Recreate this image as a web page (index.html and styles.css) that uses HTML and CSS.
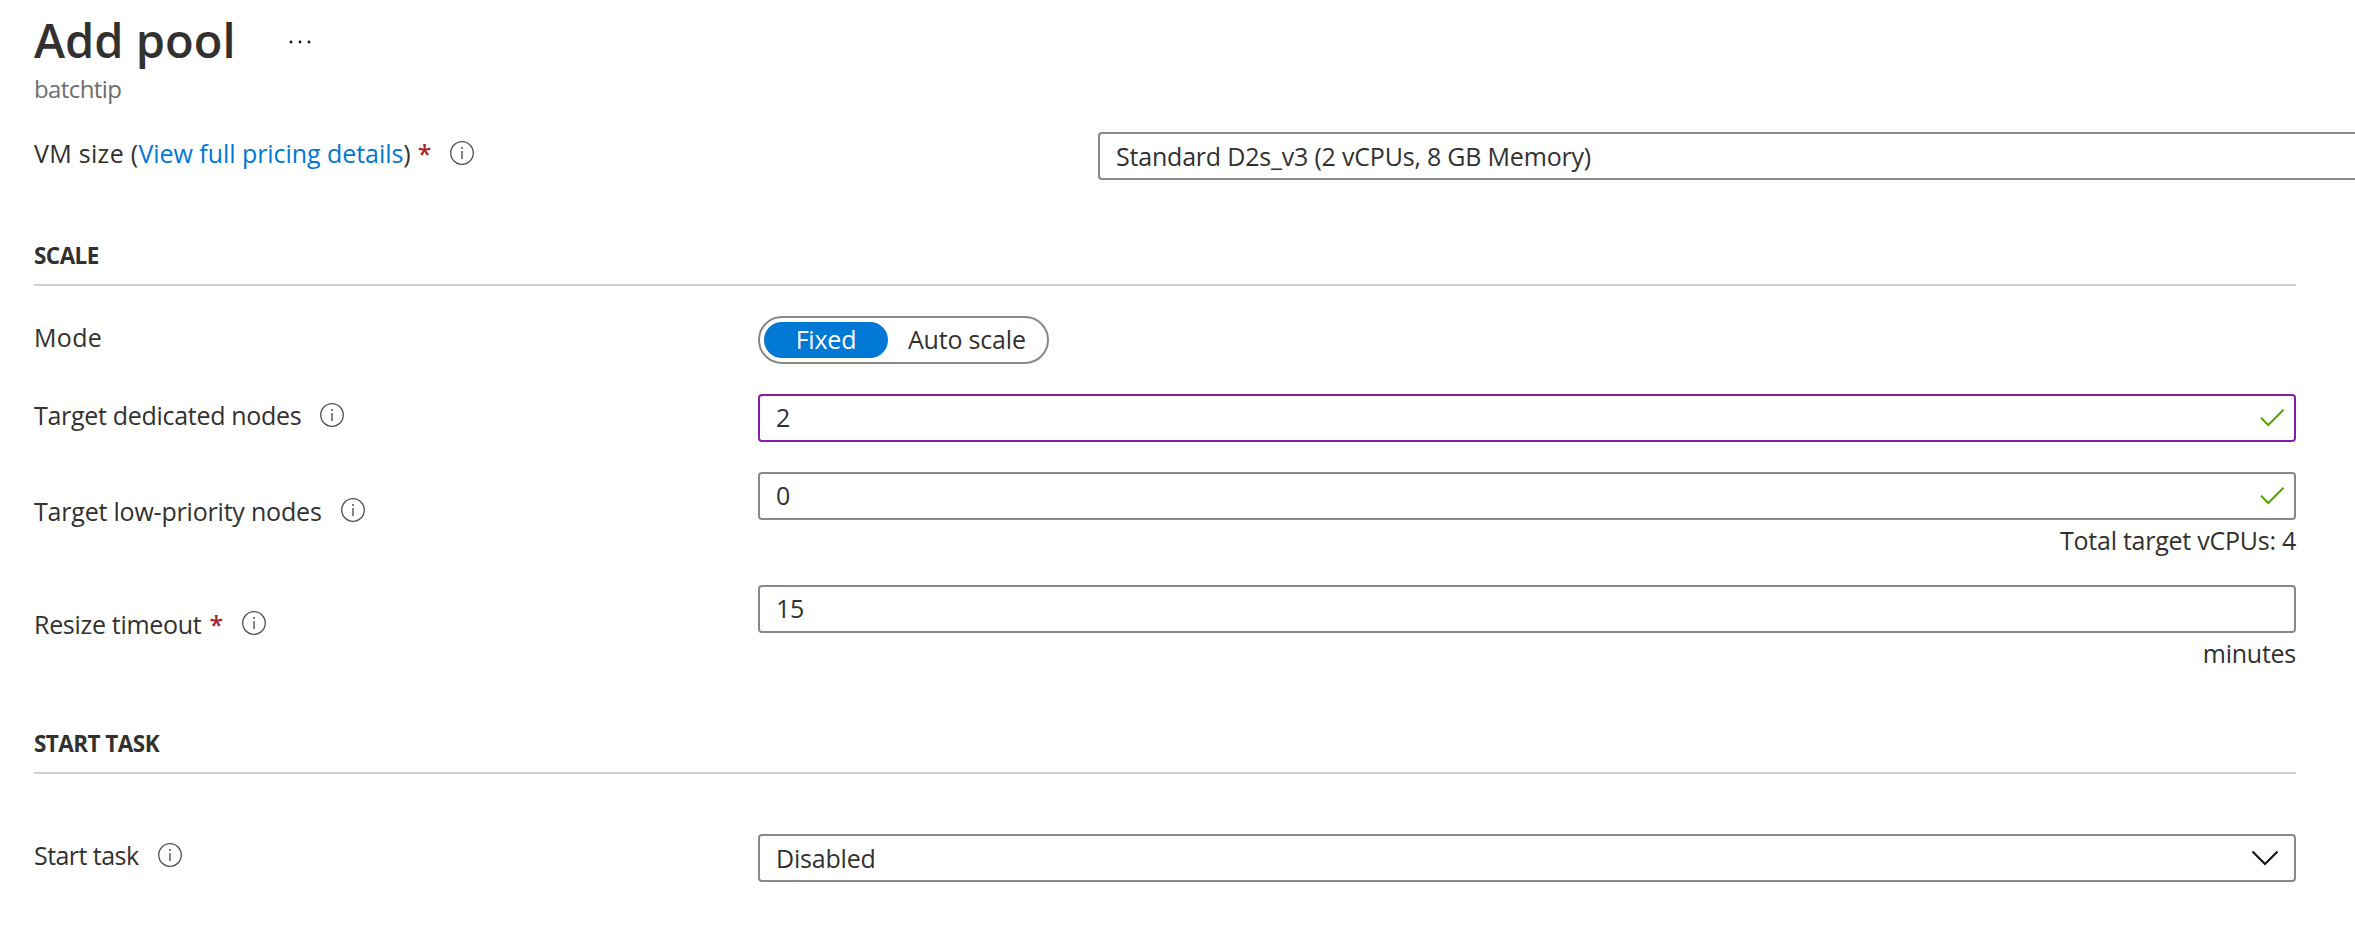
FILE: index.html
```html
<!DOCTYPE html>
<html lang="en">
<head>
<meta charset="utf-8">
<title>Add pool</title>
<link rel="stylesheet" href="styles.css">
</head>
<body>
<svg class="defs" aria-hidden="true">
  <symbol id="info" viewBox="0 0 24 24">
    <circle cx="12" cy="12" r="11.3" fill="none" stroke="#505050" stroke-width="1.3"/>
    <path d="M12 10v8" stroke="#505050" stroke-width="1.4"/>
    <circle cx="12" cy="7" r="1" fill="#505050"/>
  </symbol>
  <symbol id="check" viewBox="0 0 26 20">
    <path d="M2 9.7L9.3 17L24.5 1.8" fill="none" stroke="#57a300" stroke-width="2"/>
  </symbol>
  <symbol id="chevron" viewBox="0 0 28 16">
    <path d="M1.5 1.5L14 14L26.5 1.5" fill="none" stroke="#111" stroke-width="2"/>
  </symbol>
</svg>
<main class="page">
  <header class="header">
    <div class="title-line">
      <h1 class="title">Add pool</h1>
      <svg class="more" viewBox="0 0 22 4"><circle cx="2" cy="2" r="1.4"/><circle cx="11" cy="2" r="1.4"/><circle cx="20" cy="2" r="1.4"/></svg>
    </div>
    <p class="subtitle">batchtip</p>
  </header>

  <div class="row row-wide">
    <div class="label label-vm"><span class="vm">VM size (</span><a class="link">View full pricing details</a><span>)</span><span class="req">*</span><svg class="info"><use href="#info"/></svg></div>
    <div class="field field-cut"><span class="value value-vm">Standard D2s_v3 (2 vCPUs, 8 GB Memory)</span></div>
  </div>

  <h2 class="section">SCALE</h2>
  <div class="rows">
    <div class="row">
      <div class="label"><span class="mode">Mode</span></div>
      <div class="toggle"><span class="option selected">Fixed</span><span class="option">Auto scale</span></div>
    </div>
    <div class="row">
      <div class="label"><span class="name">Target dedicated nodes</span><svg class="info"><use href="#info"/></svg></div>
      <div class="field active"><span class="value number">2</span><svg class="check"><use href="#check"/></svg></div>
    </div>
    <div class="row">
      <div class="label low"><span class="name name-low">Target low-priority nodes</span><svg class="info"><use href="#info"/></svg></div>
      <div class="control">
        <div class="field"><span class="value number">0</span><svg class="check"><use href="#check"/></svg></div>
        <div class="helper">Total target vCPUs: 4</div>
      </div>
    </div>
    <div class="row">
      <div class="label low"><span class="name">Resize timeout</span><span class="req">*</span><svg class="info"><use href="#info"/></svg></div>
      <div class="control">
        <div class="field"><span class="value number">15</span></div>
        <div class="helper">minutes</div>
      </div>
    </div>
  </div>

  <h2 class="section">START TASK</h2>
  <div class="rows rows-task">
    <div class="row">
      <div class="label"><span class="name name-task">Start task</span><svg class="info"><use href="#info"/></svg></div>
      <div class="field"><span class="value">Disabled</span><svg class="chevron"><use href="#chevron"/></svg></div>
    </div>
  </div>
</main>
</body>
</html>
```

FILE: styles.css
```css
* { box-sizing: border-box; }
body {
  margin: 0;
  background: #fff;
  color: #323130;
  font: 25px/30px "Open Sans", "Noto Sans", sans-serif;
}
.defs { display: none; }
.page {
  height: 930px;
  padding: 10px 59px 0 34px;
  overflow: hidden;
}
.title-line { display: flex; align-items: center; }
.title { margin: 0; font-size: 47px; font-weight: 600; line-height: 60px; }
.more { width: 22px; height: 4px; margin: 4px 0 0 53px; fill: #111; }
.subtitle { margin: 4px 0 0; font-size: 24px; letter-spacing: -0.6px; color: #6e6e6e; }

.row { display: grid; grid-template-columns: 724px 1fr; align-items: start; }
.row-wide { grid-template-columns: 1064px 1fr; margin: 28px -59px 0 0; }
.rows { display: grid; gap: 30px; margin-top: 30px; }
.rows-task { margin-top: 60px; }

.label { display: flex; align-items: center; padding-top: 6px; white-space: nowrap; }
.label.low { padding-top: 24px; }
.vm { letter-spacing: 0.3px; }
.link { color: #0078d4; letter-spacing: -0.05px; }
.mode { letter-spacing: 0.35px; }
.name { letter-spacing: -0.3px; }
.name-low { letter-spacing: -0.2px; }
.name-task { letter-spacing: -0.55px; }
.req { margin-left: 8px; color: #a4262c; font-weight: 600; }
.label-vm .req { margin-left: 7px; }
.info { width: 24px; height: 24px; margin-left: 19px; }
.low .info { margin-top: -2px; }

.section {
  margin: 60px 0 0;
  padding: 1px 0 13px;
  border-bottom: 2px solid #d2d0ce;
  font-size: 22.5px;
  font-weight: 700;
  letter-spacing: -0.55px;
}

.field {
  display: flex;
  align-items: center;
  height: 48px;
  padding: 0 9px 0 15px;
  border: 2px solid #8a8886;
  border-radius: 4px;
}
.field.active { border-color: #881fa3; }
.field-cut { border-right: 0; border-radius: 4px 0 0 4px; }
.value { flex: 1; padding-left: 1px; letter-spacing: -0.2px; }
.number { padding-bottom: 2px; }
.check { width: 26px; height: 20px; }
.chevron { width: 28px; height: 16px; margin-right: 6px; }
.helper { margin-top: 5px; text-align: right; letter-spacing: -0.25px; }

.toggle {
  display: flex;
  align-items: center;
  width: 291px;
  height: 48px;
  padding: 0 4px;
  border: 2px solid #8a8886;
  border-radius: 24px;
}
.option {
  flex: none;
  padding: 0 0 2px 20px;
  line-height: 34px;
  letter-spacing: -0.2px;
  white-space: nowrap;
}
.selected {
  width: 124px;
  padding: 0 0 2px;
  border-radius: 18px;
  background: #0078d4;
  color: #fff;
  text-align: center;
}
```
